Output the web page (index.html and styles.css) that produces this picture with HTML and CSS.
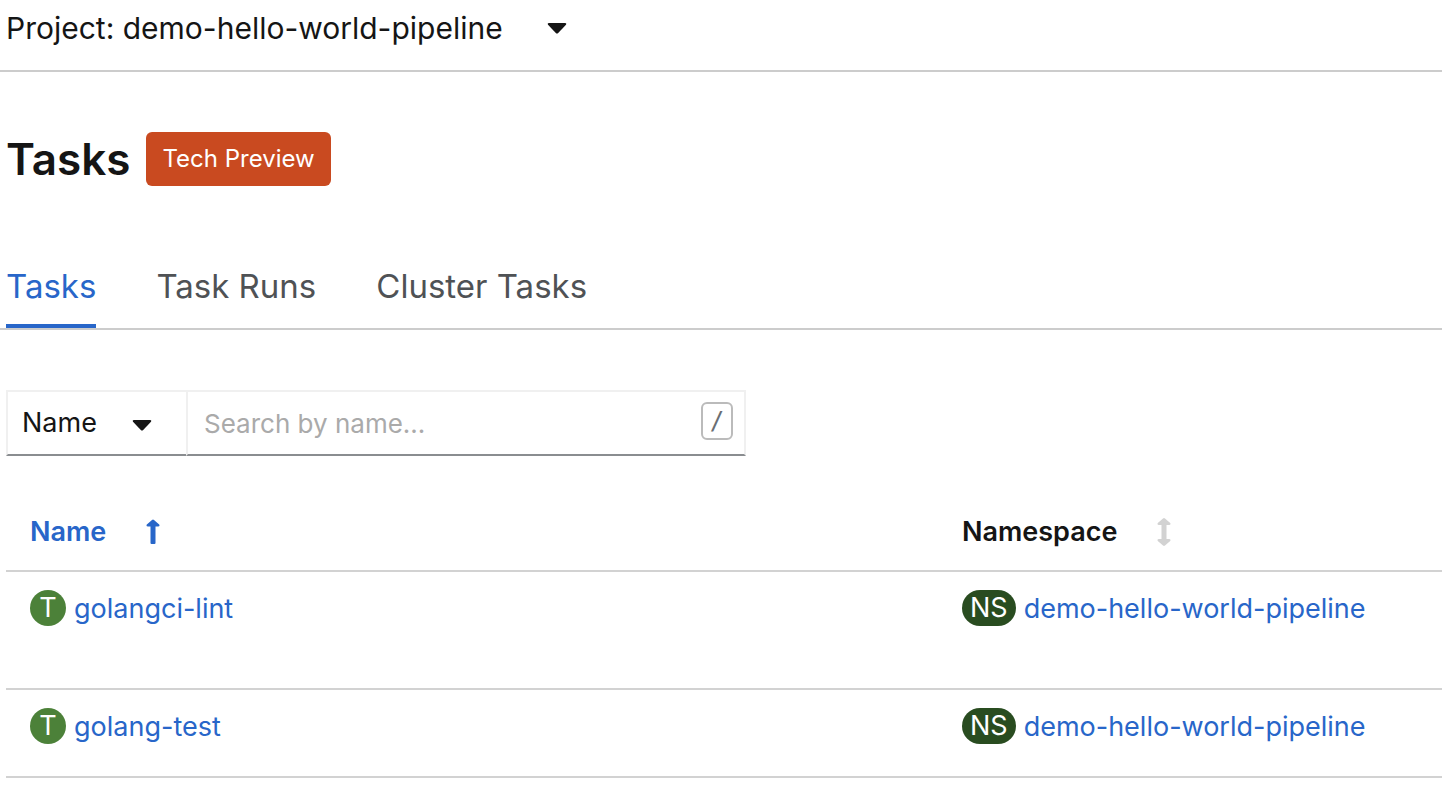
FILE: index.html
```html
<!DOCTYPE html>
<html lang="en">
<head>
<meta charset="utf-8">
<meta name="viewport" content="width=device-width, initial-scale=1">
<title>Tasks</title>
<link rel="stylesheet" href="styles.css">
</head>
<body>
<header class="project-bar">
  <button class="project-toggle" type="button">
    <span>Project: demo-hello-world-pipeline</span>
    <svg class="caret" viewBox="0 0 20 12" aria-hidden="true"><path d="M1.6 1H18.4Q20 1.4 19 2.8L11.2 10.9Q10 12 8.8 10.9L1 2.8Q0 1.4 1.6 1Z"/></svg>
  </button>
</header>
<main>
  <div class="heading">
    <h1 class="title">Tasks</h1>
    <span class="tech-badge">Tech Preview</span>
  </div>
  <nav class="tabs">
    <a class="tab tab-active" href="#tasks">Tasks</a>
    <a class="tab" href="#runs">Task Runs</a>
    <a class="tab" href="#cluster">Cluster Tasks</a>
  </nav>
  <div class="content">
    <form class="filter">
      <div class="filter-type">
        <select class="filter-select" aria-label="Filter type"><option>Name</option></select>
        <svg class="caret filter-caret" viewBox="0 0 20 12" aria-hidden="true"><path d="M1.6 1H18.4Q20 1.4 19 2.8L11.2 10.9Q10 12 8.8 10.9L1 2.8Q0 1.4 1.6 1Z"/></svg>
      </div>
      <div class="filter-search">
        <input class="filter-input" type="text" placeholder="Search by name..." aria-label="Search by name">
        <kbd class="shortcut">/</kbd>
      </div>
    </form>
    <table class="table">
      <thead>
        <tr>
          <th class="col-name" scope="col" aria-sort="ascending"><button class="sort sort-active" type="button">Name
            <svg class="sort-icon" viewBox="0 0 14 28" aria-hidden="true"><path d="M4.500 25V8.500H2Q-.2 8.200 .8 6.500L6 2Q7 1.200 8 2L13.200 6.500Q14.200 8.200 12 8.500H9.500V25Q9.500 26 8.500 26H5.500Q4.500 26 4.500 25Z"/></svg></button></th>
          <th scope="col"><button class="sort" type="button">Namespace
            <svg class="sort-icon sort-idle" viewBox="0 0 14 28" aria-hidden="true"><path d="M4.500 21V7H2Q-.2 6.700 .8 5L6 .5Q7 -.3 8 .5L13.200 5Q14.200 6.700 12 7H9.500V21H12Q14.200 21.300 13.200 23L8 27.500Q7 28.300 6 27.500L.8 23Q-.2 21.300 2 21Z"/></svg></button></th>
        </tr>
      </thead>
      <tbody>
        <tr class="row-tall">
          <td><div class="resource"><span class="badge badge-task">T</span><a class="link" href="#golangci-lint">golangci-lint</a></div></td>
          <td><div class="resource"><span class="badge badge-ns">NS</span><a class="link" href="#ns">demo-hello-world-pipeline</a></div></td>
        </tr>
        <tr>
          <td><div class="resource"><span class="badge badge-task">T</span><a class="link" href="#golang-test">golang-test</a></div></td>
          <td><div class="resource"><span class="badge badge-ns">NS</span><a class="link" href="#ns">demo-hello-world-pipeline</a></div></td>
        </tr>
      </tbody>
    </table>
  </div>
</main>
</body>
</html>
```
FILE: styles.css
```css
* { box-sizing: border-box; }
body {
  margin: 0;
  background: #fff;
  color: #151515;
  font-family: Inter, "Open Sans", sans-serif;
  font-size: 27px;
  line-height: 36px;
}
button, select, input { font: inherit; color: inherit; }
button { border: 0; padding: 0; background: none; cursor: pointer; }
.project-bar { padding: 8px 6px 22px; border-bottom: 2px solid #ccc; }
.project-toggle { display: flex; align-items: center; gap: 44px; font-size: 30px; line-height: 40px; }
.caret { width: 20px; height: 12px; fill: #151515; }
.heading { display: flex; align-items: center; gap: 16px; padding: 60px 6px 0; }
.title { margin: 0; font-size: 44px; line-height: 54px; font-weight: 600; }
.tech-badge { padding: 9px 16px; border-radius: 6px; background: #c94a20; color: #fff; font-size: 24px; }
.tabs { display: flex; gap: 60px; margin-top: 60px; padding: 0 6px; border-bottom: 2px solid #ccc; font-size: 33px; line-height: 40px; }
.tab { padding: 20px 0 18px; border-bottom: 4px solid transparent; color: #4f5255; text-decoration: none; }
.tab-active { color: #2866c9; border-color: #2866c9; }
.content { padding: 60px 0 0 6px; }
.filter { display: flex; width: 740px; max-width: 100%; height: 66px; }
.filter-type, .filter-search { position: relative; border: 2px solid #f0f0f0; border-bottom-color: #8a8d90; }
.filter-type { width: 180px; border-right: 0; }
.filter-search { flex: 1; }
.filter-select, .filter-input { width: 100%; height: 100%; border: 0; padding: 0 14px; background: transparent; appearance: none; }
.filter-input { font-size: 26px; padding: 0 50px 0 16px; }
.filter-caret { position: absolute; right: 34px; top: 27px; pointer-events: none; }
.filter-input::placeholder { color: #aaa; opacity: 1; }
.shortcut { position: absolute; right: 11px; top: 10px; width: 32px; height: 38px; border: 2px solid #bbb; border-radius: 6px; color: #6a6e73; font: 24px/34px "DejaVu Sans Mono", monospace; text-align: center; }
.table { width: 100%; margin-top: 38px; border-collapse: separate; border-spacing: 0; table-layout: fixed; }
.col-name { width: 64.9%; }
.table th, .table td { padding: 18px 24px; border-bottom: 2px solid #d2d2d2; text-align: left; vertical-align: top; }
.table th { padding: 20px 24px; }
.table td { padding-bottom: 30px; }
.table .row-tall td { padding-bottom: 60px; }
.sort { display: flex; align-items: center; gap: 40px; font-weight: 600; }
.sort-active { color: #2866c9; }
.sort-icon { width: 14px; height: 28px; fill: currentColor; }
.sort-idle { color: #d2d2d2; }
.resource { display: flex; align-items: flex-start; gap: 8px; white-space: nowrap; }
.badge { min-width: 36px; height: 36px; border-radius: 18px; color: #fff; text-align: center; }
.badge-task { background: #4c8139; }
.badge-ns { padding: 0 8px; background: #294c20; }
.link { color: #2866c9; line-height: 38px; text-decoration: none; }
```
